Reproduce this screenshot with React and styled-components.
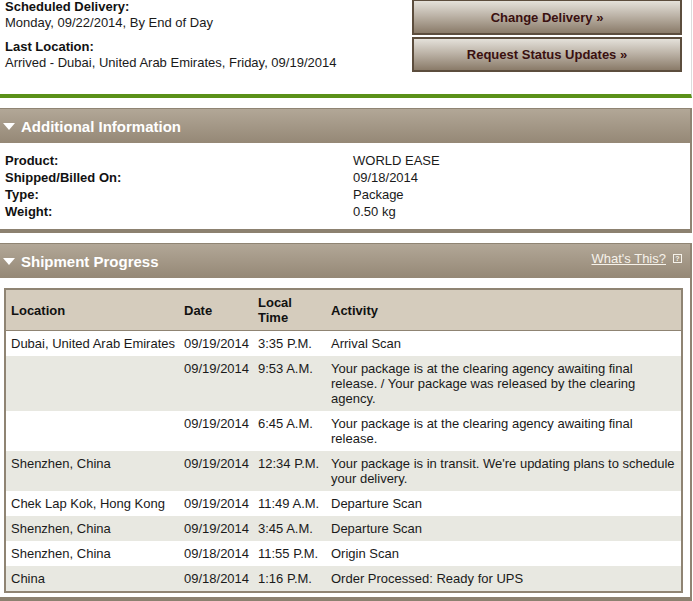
import React from 'react';
import styled, { createGlobalStyle } from 'styled-components';

const GlobalStyle = createGlobalStyle`
  body {
    margin: 0;
    background: #fff;
    font-family: "Liberation Sans", Arial, sans-serif;
    font-size: 13px;
    color: #1a1a1a;
  }
`;

const progress = [
  { location: 'Dubai, United Arab Emirates', date: '09/19/2014', time: '3:35 P.M.', activity: 'Arrival Scan' },
  { location: '', date: '09/19/2014', time: '9:53 A.M.', activity: 'Your package is at the clearing agency awaiting final release. / Your package was released by the clearing agency.' },
  { location: '', date: '09/19/2014', time: '6:45 A.M.', activity: 'Your package is at the clearing agency awaiting final release.' },
  { location: 'Shenzhen, China', date: '09/19/2014', time: '12:34 P.M.', activity: "Your package is in transit. We're updating plans to schedule your delivery." },
  { location: 'Chek Lap Kok, Hong Kong', date: '09/19/2014', time: '11:49 A.M.', activity: 'Departure Scan' },
  { location: 'Shenzhen, China', date: '09/19/2014', time: '3:45 A.M.', activity: 'Departure Scan' },
  { location: 'Shenzhen, China', date: '09/18/2014', time: '11:55 P.M.', activity: 'Origin Scan' },
  { location: 'China', date: '09/18/2014', time: '1:16 P.M.', activity: 'Order Processed: Ready for UPS' },
];

const details = [
  ['Product:', 'WORLD EASE'],
  ['Shipped/Billed On:', '09/18/2014'],
  ['Type:', 'Package'],
  ['Weight:', '0.50 kg'],
];

// Collapsible section toggle arrow
const Arrow = () => (
  <ArrowIcon width="12" height="7" viewBox="0 0 12 7">
    <polygon points="0,0 12,0 6,7" fill="#fff" />
  </ArrowIcon>
);

const App = () => (
  <Page>
    <GlobalStyle />
    <Summary>
      <SummaryText>
        <Block>
          <Label>Scheduled Delivery:</Label>
          <div>Monday, 09/22/2014, By End of Day</div>
        </Block>
        <Block>
          <Label>Last Location:</Label>
          <div>Arrived - Dubai, United Arab Emirates, Friday, 09/19/2014</div>
        </Block>
      </SummaryText>
      <Actions>
        <ActionButton>Change Delivery »</ActionButton>
        <ActionButton>Request Status Updates »</ActionButton>
      </Actions>
    </Summary>

    <Section>
      <SectionHeader>
        <Arrow />
        <SectionTitle>Additional Information</SectionTitle>
      </SectionHeader>
      <DetailList>
        {details.map(([label, value]) => (
          <React.Fragment key={label}>
            <Label>{label}</Label>
            <div>{value}</div>
          </React.Fragment>
        ))}
      </DetailList>
    </Section>

    <Section>
      <SectionHeader>
        <Arrow />
        <SectionTitle>Shipment Progress</SectionTitle>
        <HelpLink href="#">
          What&apos;s This?
          <HelpIcon>?</HelpIcon>
        </HelpLink>
      </SectionHeader>
      <ProgressBody>
        <ProgressTable>
          <HeadRow>
            <HeadCell>Location</HeadCell>
            <HeadCell>Date</HeadCell>
            <HeadCell>Local Time</HeadCell>
            <HeadCell>Activity</HeadCell>
          </HeadRow>
          {progress.map((row, i) => (
            <Row key={i} $shaded={i % 2 === 1}>
              <Cell>{row.location}</Cell>
              <Cell>{row.date}</Cell>
              <Cell>{row.time}</Cell>
              <Cell $wrap>{row.activity}</Cell>
            </Row>
          ))}
        </ProgressTable>
      </ProgressBody>
    </Section>
  </Page>
);

const Page = styled.div`
  width: 692px;
`;

const Summary = styled.div`
  display: flex;
  justify-content: space-between;
  height: 95px;
  margin-top: -1px;
  border-right: 1px solid #dcdcdc;
  border-bottom: 4px solid #5b9119;
`;

const SummaryText = styled.div`
  padding-left: 5px;
  line-height: 16px;
`;

const Block = styled.div`
  margin-bottom: 8px;
`;

const Label = styled.div`
  font-weight: bold;
  color: #111;
`;

const Actions = styled.div`
  display: flex;
  flex-direction: column;
  gap: 2px;
  width: 270px;
  margin-right: 9px;
`;

const ActionButton = styled.button`
  height: 36px;
  border: 2px solid #5c4d3d;
  background: linear-gradient(#e4e1da 0%, #bdb4a8 45%, #8a7b69 100%);
  color: #3a1010;
  font-family: "Liberation Sans", Arial, sans-serif;
  font-size: 13px;
  font-weight: bold;
  cursor: pointer;

  & + & {
    height: 35px;
  }
`;

const Section = styled.div`
  margin-top: 10px;
  border-right: 2px solid #8f8473;
  border-bottom: 4px solid #8c8170;
`;

const SectionHeader = styled.div`
  display: flex;
  align-items: center;
  height: 34px;
  border-top: 1px solid #8f8473;
  background: linear-gradient(#b2a797, #958876);
  padding-left: 3px;
`;

const ArrowIcon = styled.svg`
  margin-right: 6px;
`;

const SectionTitle = styled.h2`
  flex: 1;
  margin: 0;
  color: #fff;
  font-size: 15px;
  font-weight: bold;
`;

const HelpLink = styled.a`
  align-self: flex-start;
  display: flex;
  align-items: center;
  margin-top: 7px;
  margin-right: 8px;
  color: #f6f2ea;
  font-size: 13px;
  line-height: 15px;
  text-decoration: underline;
`;

const HelpIcon = styled.span`
  display: inline-flex;
  align-items: center;
  justify-content: center;
  width: 7px;
  height: 7px;
  margin-left: 7px;
  border: 1px solid #f6f2ea;
  font-size: 7px;
  line-height: 7px;
  font-weight: bold;
`;

const DetailList = styled.div`
  display: grid;
  grid-template-columns: 348px 1fr;
  padding: 9px 0 9px 5px;
  line-height: 17px;
`;

const ProgressBody = styled.div`
  padding: 10px 0 4px 4px;
`;

const ProgressTable = styled.div`
  width: 675px;
  border: 2px solid #8f8473;
  line-height: 15px;
`;

const HeadRow = styled.div`
  display: grid;
  grid-template-columns: 173px 74px 73px 1fr;
  align-items: center;
  background: #d5ccbd;
  border-bottom: 1px solid #8f8473;
  padding: 5px 0;
  min-height: 30px;
  font-weight: bold;
  color: #111;
`;

const HeadCell = styled.div`
  padding: 0 5px;
`;

const Row = styled.div`
  display: grid;
  grid-template-columns: 173px 74px 73px 1fr;
  padding: 5px 0;
  background: ${(p) => (p.$shaded ? '#e8e8e1' : '#fff')};
`;

const Cell = styled.div`
  padding: 0 5px;
  white-space: ${(p) => (p.$wrap ? 'normal' : 'nowrap')};
`;

export default App;
